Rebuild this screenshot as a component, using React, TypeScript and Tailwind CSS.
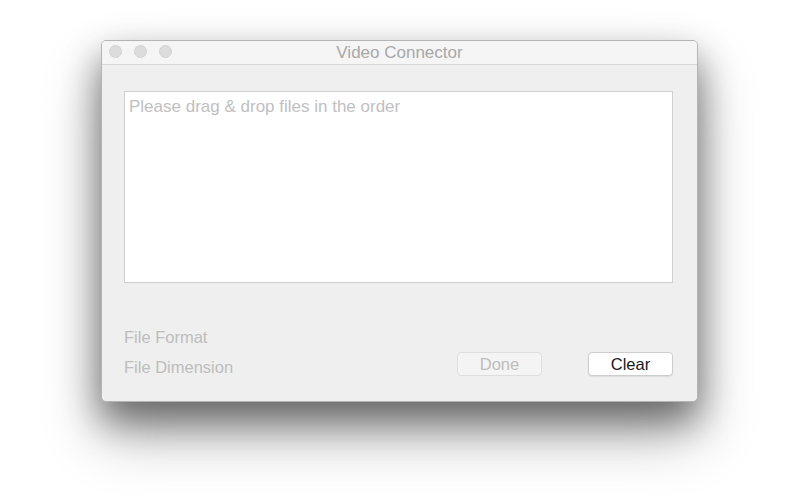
import React from 'react';

export default function App() {
  return (
    <div className="w-[800px] h-[500px] bg-white overflow-hidden pt-[40px] pl-[101px]" style={{ fontFamily: '"Liberation Sans", Arial, sans-serif' }}>
      <div className="w-[597px] h-[362px] flex flex-col bg-[#efefef] rounded-[5px] border border-[#b4b4b4] shadow-[0_18px_36px_rgba(0,0,0,0.45),0_32px_60px_rgba(0,0,0,0.3)] overflow-hidden">
        {/* title bar */}
        <div className="relative h-[24px] flex items-center justify-center bg-[#f5f5f5] border-b border-[#d8d8d8] shrink-0">
          <div className="absolute left-[7px] top-[4px] flex gap-[12px]">
            <div className="w-[13px] h-[13px] rounded-full bg-[#dcdcdc] border border-[#d2d2d2]" />
            <div className="w-[13px] h-[13px] rounded-full bg-[#dcdcdc] border border-[#d2d2d2]" />
            <div className="w-[13px] h-[13px] rounded-full bg-[#dcdcdc] border border-[#d2d2d2]" />
          </div>
          <span className="text-[17px] text-[#a8a8a8] leading-[20px]">Video Connector</span>
        </div>

        <div className="flex flex-col pl-[22px] pt-[26px]">
          <div className="w-[549px] h-[192px] bg-white border border-[#cfcfcf] px-[4px] pt-[2px]">
            <span className="text-[17px] text-[#c0c0c0]">Please drag &amp; drop files in the order</span>
          </div>

          <div className="flex mt-[44px]">
            <div className="flex flex-col gap-[10px] w-[333px]">
              <span className="text-[16.5px] text-[#bdbdbd] leading-[20px]">File Format</span>
              <span className="text-[16.5px] text-[#bdbdbd] leading-[20px]">File Dimension</span>
            </div>
            <div className="flex gap-[46px] mt-[25px]">
              <div className="w-[85px] h-[24px] flex items-center justify-center rounded-[4px] bg-[#f4f4f4] border border-[#dedede] text-[16.5px] text-[#bcbcbc]">Done</div>
              <div className="w-[85px] h-[24px] flex items-center justify-center rounded-[4px] bg-white border border-[#cdcdcd] shadow-[0_1px_1px_rgba(0,0,0,0.08)] text-[16.5px] text-[#1a1a1a]">Clear</div>
            </div>
          </div>
        </div>
      </div>
    </div>
  );
}
